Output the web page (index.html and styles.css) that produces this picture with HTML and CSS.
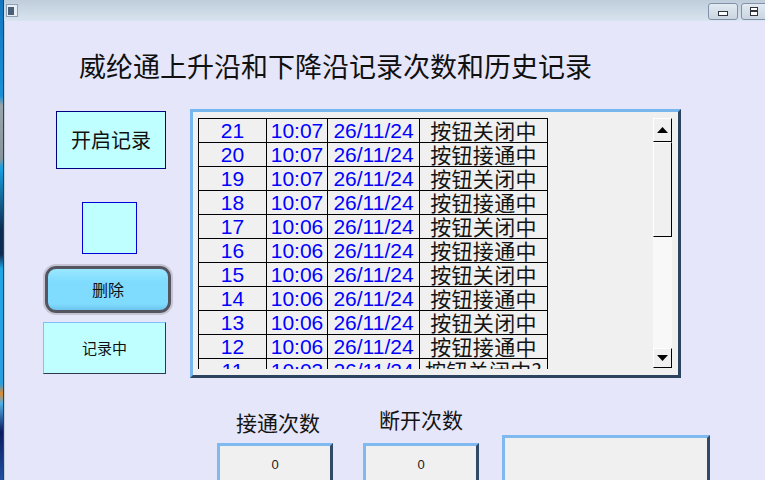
FILE: index.html
```html
<html>
<head>
<title>威纶通 记录</title>
  <link rel="stylesheet" href="styles.css">
</head>

<body>
<div class="desk"></div>
<div class="window">
  <!-- window title bar -->
  <div class="titlebar">
    <span class="appicon"><i></i></span>
    <span class="winbtns">
      <span class="wbtn"><i class="min"></i></span>
      <span class="wbtn"><i class="max"></i></span>
    </span>
  </div>

  <!-- HMI screen -->
  <div class="screen">
    <h1 class="heading">威纶通上升沿和下降沿记录次数和历史记录</h1>

    <div class="middle">
      <div class="controls">
        <div class="start-btn">开启记录</div>
        <div class="lamp"></div>
        <div class="del-btn">删除</div>
        <div class="state">记录中</div>
      </div>

      <div class="history">
        <div class="list">
          <table class="log">
            <tr><td class="n">21</td><td class="n">10:07</td><td class="n">26/11/24</td><td class="s">按钮关闭中</td></tr>
            <tr><td class="n">20</td><td class="n">10:07</td><td class="n">26/11/24</td><td class="s">按钮接通中</td></tr>
            <tr><td class="n">19</td><td class="n">10:07</td><td class="n">26/11/24</td><td class="s">按钮关闭中</td></tr>
            <tr><td class="n">18</td><td class="n">10:07</td><td class="n">26/11/24</td><td class="s">按钮接通中</td></tr>
            <tr><td class="n">17</td><td class="n">10:06</td><td class="n">26/11/24</td><td class="s">按钮关闭中</td></tr>
            <tr><td class="n">16</td><td class="n">10:06</td><td class="n">26/11/24</td><td class="s">按钮接通中</td></tr>
            <tr><td class="n">15</td><td class="n">10:06</td><td class="n">26/11/24</td><td class="s">按钮关闭中</td></tr>
            <tr><td class="n">14</td><td class="n">10:06</td><td class="n">26/11/24</td><td class="s">按钮接通中</td></tr>
            <tr><td class="n">13</td><td class="n">10:06</td><td class="n">26/11/24</td><td class="s">按钮关闭中</td></tr>
            <tr><td class="n">12</td><td class="n">10:06</td><td class="n">26/11/24</td><td class="s">按钮接通中</td></tr>
            <tr><td class="n">11</td><td class="n">10:03</td><td class="n">26/11/24</td><td class="s">按钮关闭中?</td></tr>
          </table>
        </div>
        <div class="scrollbar">
          <div class="sb-btn"><svg width="11" height="6" viewBox="0 0 11 6"><path d="M0 6 L5.5 0 L11 6 Z" fill="#000"/></svg></div>
          <div class="sb-thumb"></div>
          <div class="sb-track"></div>
          <div class="sb-btn down"><svg width="11" height="6" viewBox="0 0 11 6"><path d="M0 0 L11 0 L5.5 6 Z" fill="#000"/></svg></div>
        </div>
      </div>
    </div>

    <div class="counters">
      <div class="counter">
        <div class="cap">接通次数</div>
        <div class="num">0</div>
      </div>
      <div class="counter second">
        <div class="cap">断开次数</div>
        <div class="num">0</div>
      </div>
      <div class="msg"></div>
    </div>
  </div>
</div>
</body>
</html>
```

FILE: styles.css
```css
body{
  margin: 0;
  width: 765px;
  height: 480px;
  overflow: hidden;
  display: flex;
  background: #e6e6fa;
  font-family: "Noto Sans CJK SC", sans-serif;
}

/* bit of desktop peeking in on the left */
.desk{
  width: 3px;
  flex: none;
  background: linear-gradient(#1476c0 0%, #1a90d8 20%, #9aa4ac 22%, #8a949c 33%, #18a0e0 35%, #0d2a50 48%, #0d2a50 53%, #20a6e6 56%, #2b9ee0 80%, #e08a30 82%, #4fb0e8 84%, #0a1a60 90%, #2050a0 100%);
}

.window{
  flex: 1;
  display: flex;
  flex-direction: column;
  border-left: 1px solid #3c3c44;
  box-shadow: inset 1px 0 #c4ccd8;
}

.titlebar{
  height: 21px;
  flex: none;
  display: flex;
  align-items: flex-start;
  justify-content: space-between;
  background: linear-gradient(#bfcddb, #d8e4ef);
}

.appicon{
  margin: 4px 0 0 2px;
  width: 10px;
  height: 11px;
  border: 1px solid #8fa0b4;
  background: #e8eef4;
  display: flex;
}
.appicon i{
  width: 6px;
  height: 8px;
  margin: 2px 0 0 1px;
  background: #4a6078;
}

.winbtns{
  display: flex;
  margin-top: 3px;
  margin-right: -6px;
}
.wbtn{
  width: 28px;
  height: 15px;
  margin-left: 3px;
  border: 1px solid #8192a8;
  border-radius: 3px;
  background: linear-gradient(#e2eaf2, #c9d5e1);
  display: flex;
  align-items: center;
  justify-content: center;
}
.wbtn .min{
  width: 8px;
  height: 3px;
  margin-top: 3px;
  border: 1px solid #30343c;
  background: #fff;
}
.wbtn .max{
  width: 6px;
  height: 7px;
  border: 1px solid #30343c;
  background: linear-gradient(#fff 2px, #30343c 2px, #30343c 4px, #fff 4px);
  margin-right: 4px;
}

.screen{
  flex: 1;
  padding-left: 39px;
}

.heading{
  margin: 31px 0 0 36px;
  font-size: 27px;
  line-height: 27px;
  font-weight: normal;
  color: #101010;
  white-space: nowrap;
}

.middle{
  display: flex;
  margin-top: 30px;
}

/* left column of HMI parts */
.controls{
  width: 128px;
  flex: none;
  display: flex;
  flex-direction: column;
  align-items: flex-start;
}

.start-btn{
  margin: 2px 0 0 13px;
  width: 108px;
  height: 56px;
  border: 1px solid #000080;
  background: #c0ffff;
  font-size: 20px;
  line-height: 56px;
  text-align: center;
  color: #101010;
}

.lamp{
  margin: 33px 0 0 39px;
  width: 53px;
  height: 50px;
  border: 1px solid #0000d8;
  background: #c0ffff;
}

.del-btn{
  margin: 12px 0 0 2px;
  width: 120px;
  height: 41px;
  border: 3px solid #55555f;
  border-radius: 11px;
  box-shadow: 0 0 0 2px #c4c4d4;
  background: linear-gradient(#9ae8ff, #80dcff 30%, #80dcff 85%, #6cc4ec);
  font-size: 16px;
  line-height: 41px;
  text-align: center;
  color: #101010;
}

.state{
  margin-top: 9px;
  width: 121px;
  height: 50px;
  border: 1px solid;
  border-color: #80c0ff #303850 #303850 #80c0ff;
  background: #c0ffff;
  font-size: 15px;
  line-height: 50px;
  text-align: center;
  color: #101010;
}

/* history list box */
.history{
  margin-left: 19px;
  width: 485px;
  height: 263px;
  border: 3px solid;
  border-color: #78b6ee #2c4460 #2c4460 #78b6ee;
  background: #f0f0f0;
  display: flex;
  padding: 6px 6px 6px 5px;
  box-sizing: content-box;
  flex: none;
}
.history{
  height: 251px;
  width: 474px;
}

.list{
  flex: 1;
  height: 251px;
  overflow: hidden;
}

.log{
  border-collapse: separate;
  border-spacing: 0;
  table-layout: fixed;
  border-top: 1px solid #000;
  border-left: 1px solid #000;
}
.log td{
  height: 23px;
  padding: 0;
  border-right: 1px solid #000;
  border-bottom: 1px solid #000;
  text-align: center;
  white-space: nowrap;
  line-height: 23px;
}
.log td:nth-child(1){ width: 67px; }
.log td:nth-child(2){ width: 60px; }
.log td:nth-child(3){ width: 91px; }
.log td:nth-child(4){ width: 127px; }

.log .n{
  font-family: "Liberation Sans", Arial, sans-serif;
  font-size: 21px;
  color: #0000ff;
}
.log .s{
  font-family: "Noto Sans CJK SC", sans-serif;
  font-size: 21px;
  color: #141414;
  letter-spacing: 0.3px;
}

.scrollbar{
  width: 19px;
  height: 250px;
  flex: none;
  display: flex;
  flex-direction: column;
}
.sb-btn{
  height: 23px;
  border-top: 1px solid #fff;
  border-left: 1px solid #fff;
  border-right: 1px solid #000;
  border-bottom: 1px solid #000;
  background: #f0f0f0;
  display: flex;
  align-items: center;
  justify-content: center;
  box-sizing: border-box;
  height: 24px;
}
.sb-btn.down{ height: 20px; }
.sb-thumb{
  height: 95px;
  box-sizing: border-box;
  border-top: 1px solid #fff;
  border-left: 1px solid #fff;
  border-right: 1px solid #000;
  border-bottom: 1px solid #000;
  background: #f0f0f0;
}
.sb-track{
  flex: 1;
  background: #f8f8f8;
}

/* counters along the bottom */
.counters{
  display: flex;
  align-items: flex-start;
  margin-top: 34px;
  padding-left: 174px;
}
.counter{
  width: 116px;
  display: flex;
  flex-direction: column;
  align-items: center;
}
.counter.second{ margin-left: 30px; }
.cap{
  font-size: 21px;
  line-height: 21px;
  color: #141414;
  margin-left: 6px;
  margin-bottom: 10px;
}
.second .cap{
  margin: -3px 0 13px 0;
}
.num{
  width: 110px;
  height: 38px;
  border: 3px solid;
  border-color: #80b8f0 #304a68 #304a68 #80b8f0;
  background: #f0f0f0;
  font-family: "Liberation Sans", Arial, sans-serif;
  font-size: 13px;
  line-height: 38px;
  text-align: center;
  color: #202020;
}
.msg{
  margin: 23px 0 0 23px;
  width: 202px;
  height: 50px;
  border: 3px solid;
  border-color: #80b8f0 #304a68 #304a68 #80b8f0;
  background: #f0f0f0;
}
```
